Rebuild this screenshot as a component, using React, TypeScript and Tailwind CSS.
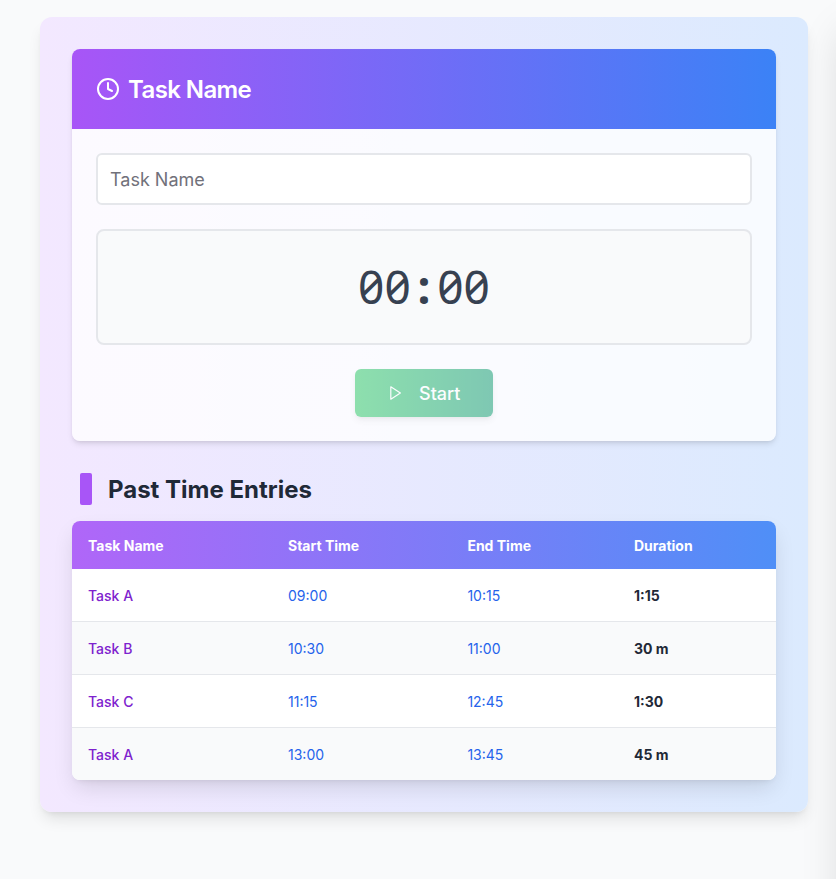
import { Clock } from "lucide-react";

const entries = [
  { task: "Task A", start: "09:00", end: "10:15", duration: "1:15" },
  { task: "Task B", start: "10:30", end: "11:00", duration: "30 m" },
  { task: "Task C", start: "11:15", end: "12:45", duration: "1:30" },
  { task: "Task A", start: "13:00", end: "13:45", duration: "45 m" },
];

function PlayIcon() {
  return (
    <svg
      className="mr-4 size-4"
      viewBox="0 0 16 16"
      fill="none"
      stroke="currentColor"
      strokeWidth="1.2"
      strokeLinejoin="round"
    >
      <path d="M3.8 1.8 13.4 8 3.8 14.2Z" />
    </svg>
  );
}

function Timer() {
  return (
    <div className="flex h-[116px] items-center justify-center rounded-lg border-2 border-[#e5e7eb] bg-[#f9fafb]">
      <div className="flex pb-0.5 font-['Noto_Sans',sans-serif] text-[46px] leading-[48px] text-[#374151] slashed-zero">
        {"00:00".split("").map((char, i) => (
          <span
            key={i}
            className={
              char === ":"
                ? "w-[26.4px] text-center font-bold"
                : "w-[26.4px] text-center"
            }
          >
            {char}
          </span>
        ))}
      </div>
    </div>
  );
}

function TaskCard() {
  return (
    <section className="overflow-hidden rounded-lg bg-white/80 shadow-md">
      <header className="flex h-20 items-center gap-2 bg-linear-to-r/srgb from-[#a855f7] to-[#3b82f6] px-6 text-white">
        <Clock size={24} strokeWidth={2} />
        <h1 className="pt-0.5 text-2xl font-semibold tracking-tight">Task Name</h1>
      </header>
      <div className="flex flex-col gap-6 p-6">
        <input
          type="text"
          placeholder="Task Name"
          className="h-[52px] w-full rounded-md border-2 border-[#e5e7eb] bg-white px-3 text-lg placeholder:text-[#71717a]"
        />
        <Timer />
        <button
          disabled
          className="flex h-12 w-[138px] items-center self-center rounded-md bg-linear-to-r/srgb from-[#22c55e] to-[#059669] pl-8 text-lg font-medium text-white opacity-50 shadow-md"
        >
          <PlayIcon />
          <span className="pt-0.5">Start</span>
        </button>
      </div>
    </section>
  );
}

function EntriesTable() {
  return (
    <div className="overflow-hidden rounded-lg bg-white shadow-[0_10px_22px_-3px_rgb(0_0_0/0.12),0_4px_6px_-4px_rgb(0_0_0/0.1)]">
      <table className="w-full table-fixed border-separate border-spacing-0 text-left text-sm">
        <colgroup>
          <col className="w-[200px]" />
          <col className="w-[179.4px]" />
          <col className="w-[166.6px]" />
          <col />
        </colgroup>
        <thead>
          <tr className="h-12 bg-linear-to-r/srgb from-[#b066f8] to-[#4f8ff7] text-white *:px-4 *:pt-0.5 *:font-bold">
            <th>Task Name</th>
            <th>Start Time</th>
            <th>End Time</th>
            <th>Duration</th>
          </tr>
        </thead>
        <tbody>
          {entries.map((entry, i) => (
            <tr
              key={i}
              className="h-[53px] *:border-b *:border-[#e5e7eb] *:px-4 *:pt-0.5 odd:bg-white even:bg-[#f9fafb] last:h-[52px] last:*:border-b-0"
            >
              <td className="font-medium text-[#7e22ce]">{entry.task}</td>
              <td className="text-[#2563eb]">{entry.start}</td>
              <td className="text-[#2563eb]">{entry.end}</td>
              <td className="font-bold text-[#1f2937]">{entry.duration}</td>
            </tr>
          ))}
        </tbody>
      </table>
    </div>
  );
}

export default function App() {
  return (
    <div className="relative h-[879px] overflow-hidden bg-[#f9fafb] pt-[17px] pr-7 pl-10 font-[Inter,sans-serif]">
      <div className="absolute top-0 left-full h-[1200px] w-[300px] shadow-[0_25px_40px_-8px_rgb(0_0_0/0.15)]" />
      <main className="relative h-[795px] rounded-xl bg-linear-to-r/srgb from-[#f3e8ff] to-[#dbeafe] p-8 shadow-lg">
        <TaskCard />
        <h2 className="mt-8 mb-4 ml-2 flex h-8 items-center gap-4 text-2xl font-[650] text-[#1f2937]">
          <span className="h-8 w-3 rounded-xs bg-[#a855f7]" />
          <span className="pt-0.5">Past Time Entries</span>
        </h2>
        <EntriesTable />
      </main>
    </div>
  );
}
